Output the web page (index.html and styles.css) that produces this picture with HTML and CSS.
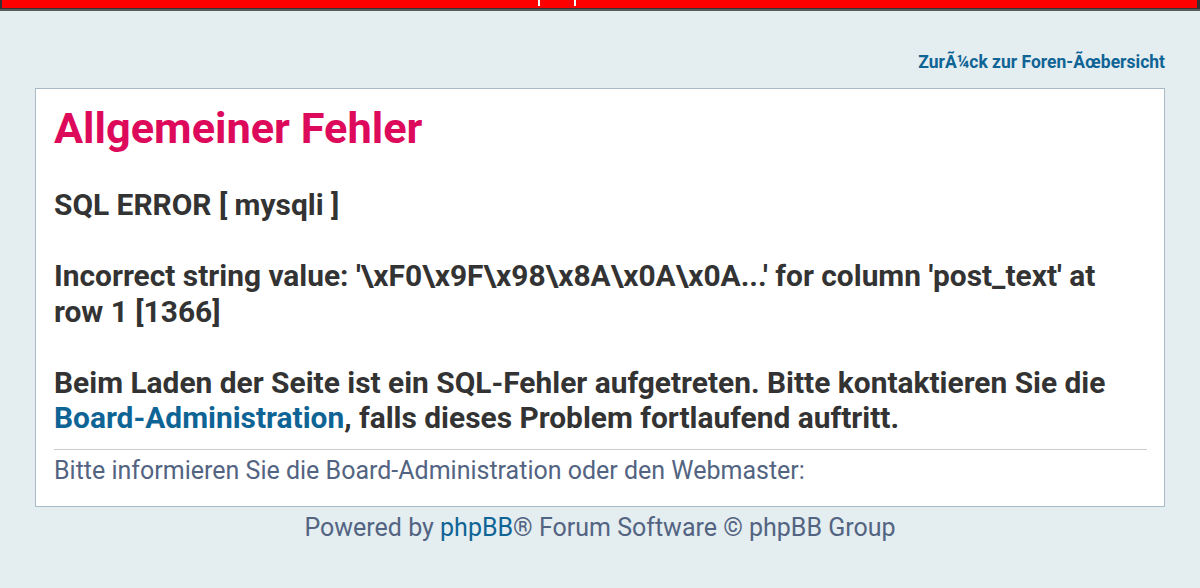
FILE: index.html
```html
<!DOCTYPE html>
<html lang="de">
<head>
<meta charset="utf-8">
<title>Allgemeiner Fehler</title>
<link rel="stylesheet" href="styles.css">
</head>
<body>
<div class="topbar">
  <span class="tick tick-a"></span>
  <span class="tick tick-b"></span>
</div>
<div class="wrap">
  <div class="backrow"><a class="backlink" href="#">ZurÃ¼ck zur Foren-Ãœbersicht</a></div>
  <div class="panel">
    <h1 class="title">Allgemeiner Fehler</h1>
    <div class="message">SQL ERROR [ mysqli ]<br><br>Incorrect string value: '\xF0\x9F\x98\x8A\x0A\x0A...' for column 'post_text' at row 1 [1366]<br><br>Beim Laden der Seite ist ein SQL-Fehler aufgetreten. Bitte kontaktieren Sie die <a class="link" href="#">Board-Administration</a>, falls dieses Problem fortlaufend auftritt.</div>
    <div class="notice">Bitte informieren Sie die Board-Administration oder den Webmaster:</div>
  </div>
  <div class="footer">Powered by <a class="link" href="#">phpBB</a>® Forum Software © phpBB Group</div>
</div>
</body>
</html>
```

FILE: styles.css
```css
html, body {
  margin: 0;
  padding: 0;
}
body {
  background: #e4edf0;
  font-family: Roboto, "Liberation Sans", Arial, sans-serif;
  min-height: 588px;
}
.topbar {
  position: relative;
  height: 8px;
  background: #ff0000;
  border-left: 2px solid #333;
  border-right: 3px solid #333;
  border-bottom: 1px solid #333;
  box-shadow: 0 2px 0 #5a5a5a;
}
.tick {
  position: absolute;
  top: 0;
  width: 2px;
  height: 6px;
  background: #fff;
}
.tick-a { left: 536px; }
.tick-b { left: 572px; }
.wrap {
  padding: 43px 35px 0 35px;
}
.backrow {
  display: flex;
  justify-content: flex-end;
  height: 20px;
  line-height: 20px;
  margin-bottom: 16px;
}
.backlink {
  color: #0f6496;
  font-weight: 700;
  font-size: 17.5px;
  text-decoration: none;
}
.panel {
  background: #fff;
  border: 1px solid #a9b9c5;
  padding: 15px 17px 21px 18px;
}
.title {
  margin: 0 0 33px 0;
  color: #dd0a5b;
  font-size: 43.3px;
  font-weight: 700;
  line-height: 50px;
}
.message {
  color: #333;
  font-size: 29.9px;
  font-weight: 700;
  line-height: 35.5px;
  padding-bottom: 13px;
  border-bottom: 1px solid #cccccc;
}
.link {
  color: #0f6496;
  text-decoration: none;
}
.notice {
  padding-top: 6px;
  color: #536482;
  font-size: 25px;
  line-height: 29px;
}
.footer {
  margin-top: 6px;
  text-align: center;
  color: #536482;
  font-size: 25px;
  line-height: 29px;
}
```
